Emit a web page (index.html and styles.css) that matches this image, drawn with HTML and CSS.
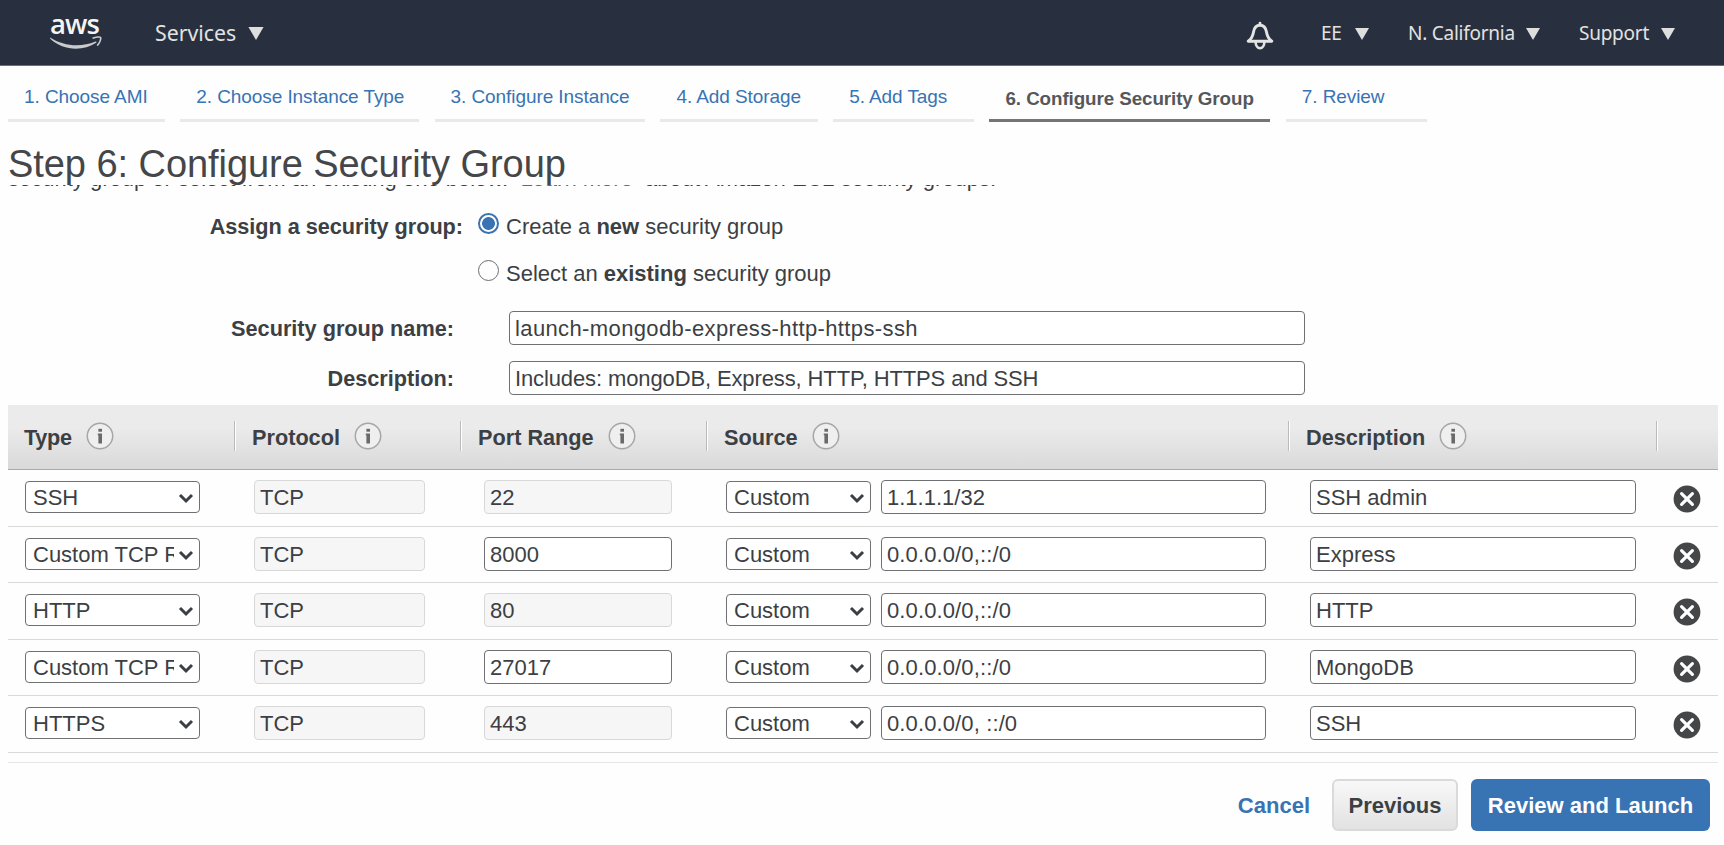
FILE: index.html
```html
<!DOCTYPE html>
<html lang="en">
<head>
<meta charset="utf-8">
<title>Step 6: Configure Security Group</title>
<link rel="stylesheet" href="styles.css">
</head>
<body>
<svg class="defs" width="0" height="0" aria-hidden="true">
  <symbol id="caret" viewBox="0 0 14 12"><path d="M0 0H14L7 12Z" fill="#dedede"/></symbol>
  <symbol id="info" viewBox="0 0 28 28"><circle cx="14" cy="14" r="12.7" fill="#efefef" stroke="#a6a6a6" stroke-width="1.5"/><rect x="12.4" y="6.8" width="3.6" height="2.9" fill="#6a6a6a"/><path d="M11.8 11.6H16V21.6H12.4V13.2H11.8Z" fill="#6a6a6a"/></symbol>
  <symbol id="chevron" viewBox="0 0 16 12"><path d="M2 3L8 9L14 3" fill="none" stroke="#3b3f45" stroke-width="3"/></symbol>
  <symbol id="remove" viewBox="0 0 28 28"><circle cx="14" cy="14" r="13.4" fill="#444648"/><path d="M8.6 8.6L19.4 19.4M19.4 8.6L8.6 19.4" stroke="#fff" stroke-width="3.2" stroke-linecap="round"/></symbol>
</svg>

<header class="nav">
  <div class="logo"><span class="logo-text">aws</span>
    <svg class="smile" viewBox="0 0 52 14" width="52" height="14"><path d="M0 1.5C14 10.5 31 11.5 45.5 5.5C46.5 5.3 47 6 46.2 6.8C33 15.5 13 15 0 2.5Z" fill="#c9cacc"/><path d="M42.5 2.2C46 .8 50 .6 50.6 1.5C51.2 3 49.6 7.2 47.2 9.6" fill="none" stroke="#c9cacc" stroke-width="1.6"/></svg>
  </div>
  <div class="menu services"><span>Services</span><svg width="16" height="13"><use href="#caret"/></svg></div>
  <svg class="bell" viewBox="0 0 28 30" width="28" height="30"><path d="M14 2.2V4M2.2 20.2C6 17.5 7 14.5 7.5 11C8.2 6.5 10.5 4.2 14 4.2S19.8 6.5 20.5 11C21 14.5 22 17.5 25.8 20.2Z" fill="none" stroke="#e4e4e4" stroke-width="2.9" stroke-linejoin="round" stroke-linecap="round"/><path d="M9.6 20.5C9.6 29.5 18.4 29.5 18.4 20.5" fill="none" stroke="#e4e4e4" stroke-width="2.6"/></svg>
  <div class="menu account"><span>EE</span><svg width="14" height="12"><use href="#caret"/></svg></div>
  <div class="menu region"><span>N. California</span><svg width="14" height="12"><use href="#caret"/></svg></div>
  <div class="menu support"><span>Support</span><svg width="14" height="12"><use href="#caret"/></svg></div>
</header>

<nav class="steps">
  <a class="step">1. Choose AMI</a>
  <a class="step">2. Choose Instance Type</a>
  <a class="step">3. Configure Instance</a>
  <a class="step">4. Add Storage</a>
  <a class="step">5. Add Tags</a>
  <a class="step active">6. Configure Security Group</a>
  <a class="step">7. Review</a>
</nav>

<h1 class="title"><span>Step 6: Configure Security Group</span></h1>

<main class="content">
  <p class="intro"><span>security group or select from an existing one below.&nbsp; <a>Learn more</a>&nbsp; about Amazon EC2 security groups.</span></p>
  <div class="assign">
    <span class="label">Assign a security group:</span>
    <i class="radio checked"></i>
    <span class="option">Create a <b>new</b> security group</span>
  </div>
  <div class="assign">
    <span class="label"></span>
    <i class="radio"></i>
    <span class="option">Select an <b>existing</b> security group</span>
  </div>
  <div class="fields">
    <span class="label">Security group name:</span><div class="field"><span class="gname">launch-mongodb-express-http-https-ssh</span></div>
    <span class="label">Description:</span><div class="field"><span class="gdesc">Includes: mongoDB, Express, HTTP, HTTPS and SSH</span></div>
  </div>

  <section class="rules">
    <div class="row head">
      <div class="th">Type<svg><use href="#info"/></svg></div>
      <div class="th">Protocol<svg><use href="#info"/></svg></div>
      <div class="th">Port Range<svg><use href="#info"/></svg></div>
      <div class="th">Source<svg><use href="#info"/></svg></div>
      <div class="th">Description<svg><use href="#info"/></svg></div>
      <div class="th"></div>
    </div>
    <div class="row">
      <div class="select type"><span>SSH</span><svg><use href="#chevron"/></svg></div>
      <div class="field off protocol">TCP</div>
      <div class="field off port">22</div>
      <div class="source"><div class="select"><span>Custom</span><svg><use href="#chevron"/></svg></div><div class="field">1.1.1.1/32</div></div>
      <div class="field desc">SSH admin</div>
      <svg class="remove"><use href="#remove"/></svg>
    </div>
    <div class="row">
      <div class="select type"><span>Custom TCP Rule</span><svg><use href="#chevron"/></svg></div>
      <div class="field off protocol">TCP</div>
      <div class="field port">8000</div>
      <div class="source"><div class="select"><span>Custom</span><svg><use href="#chevron"/></svg></div><div class="field cidr">0.0.0.0/0,::/0</div></div>
      <div class="field desc">Express</div>
      <svg class="remove"><use href="#remove"/></svg>
    </div>
    <div class="row">
      <div class="select type"><span>HTTP</span><svg><use href="#chevron"/></svg></div>
      <div class="field off protocol">TCP</div>
      <div class="field off port">80</div>
      <div class="source"><div class="select"><span>Custom</span><svg><use href="#chevron"/></svg></div><div class="field cidr">0.0.0.0/0,::/0</div></div>
      <div class="field desc">HTTP</div>
      <svg class="remove"><use href="#remove"/></svg>
    </div>
    <div class="row">
      <div class="select type"><span>Custom TCP Rule</span><svg><use href="#chevron"/></svg></div>
      <div class="field off protocol">TCP</div>
      <div class="field port">27017</div>
      <div class="source"><div class="select"><span>Custom</span><svg><use href="#chevron"/></svg></div><div class="field cidr">0.0.0.0/0,::/0</div></div>
      <div class="field desc">MongoDB</div>
      <svg class="remove"><use href="#remove"/></svg>
    </div>
    <div class="row">
      <div class="select type"><span>HTTPS</span><svg><use href="#chevron"/></svg></div>
      <div class="field off protocol">TCP</div>
      <div class="field off port">443</div>
      <div class="source"><div class="select"><span>Custom</span><svg><use href="#chevron"/></svg></div><div class="field cidr">0.0.0.0/0, ::/0</div></div>
      <div class="field desc">SSH</div>
      <svg class="remove"><use href="#remove"/></svg>
    </div>
  </section>
</main>

<footer class="actions">
  <a class="cancel">Cancel</a>
  <div class="btn previous">Previous</div>
  <div class="btn primary">Review and Launch</div>
</footer>
</body>
</html>
```
FILE: styles.css
```css
* { box-sizing: border-box; }
body {
  margin: 0;
  width: 1724px;
  height: 845px;
  overflow: hidden;
  background: #fefefe;
  color: #3c3f44;
  font: 22px/26px "Liberation Sans", Arial, sans-serif;
  white-space: nowrap;
}
svg { display: block; flex: none; }
.defs { position: absolute; }

.nav {
  display: flex;
  height: 66px;
  background: #28303f;
  border-bottom: 1px solid #6b6e72;
  color: #e2e2e2;
  font: 20px/28px "Noto Sans", "Open Sans", sans-serif;
}
.logo { width: 52px; margin: 8px 0 0 50px; }
.logo-text { display: block; height: 28px; font: 600 27.5px/32px "Open Sans", sans-serif; letter-spacing: -.9px; color: #f4f4f4; }
.menu { display: flex; align-items: flex-start; justify-content: space-between; padding-top: 19px; }
.menu svg { margin-top: 9px; }
.services { width: 109px; margin-left: 53px; font-size: 21.3px; }
.services svg { margin-top: 8px; }
.bell { margin: 21px 0 0 982px; }
.account { width: 48px; margin-left: 47px; }
.region { width: 132px; margin-left: 39px; }
.support { width: 96px; margin-left: 39px; }
.nav .account, .nav .region, .nav .support { font-size: 19px; letter-spacing: -.25px; }

.steps {
  display: grid;
  grid-template-columns: 157px 239px 210.5px 157.5px 141px 281px 141px;
  gap: 15.3px;
  height: 56px;
  padding-left: 8px;
}
.step { padding: 20px 0 0 16px; border-bottom: 3px solid #e9e9e9; color: #3873b3; font-size: 19px; line-height: 22px; letter-spacing: -.08px; }
.step.active { padding-top: 22px; border-color: #757575; color: #55575a; font-weight: bold; font-size: 18.8px; }

.title { height: 63px; margin: 0; padding: 20px 0 0 8px; font-weight: normal; font-size: 38px; line-height: 45px; letter-spacing: -.06px; color: #444649; }
.title span { position: relative; z-index: 1; }

.content { height: 578px; padding-left: 8px; }
.intro { display: flex; align-items: flex-end; height: 7px; margin: 0; overflow: hidden; }
a { color: #3873b3; }
.assign { display: flex; height: 47px; padding-top: 21px; line-height: 28px; }
.assign .label { width: 455px; letter-spacing: -.04px; }
.option { letter-spacing: -.01px; }
.label { text-align: right; font-weight: bold; font-size: 21.7px; }
.radio { flex: none; width: 21px; height: 21px; margin: 0 7px 0 15px; border: 1.5px solid #6b6d70; border-radius: 50%; }
.radio.checked { border: 2px solid #3873b3; background: radial-gradient(circle, #3873b3 6px, #fff 6.8px); }
.fields { display: grid; grid-template-columns: 446px 796px; grid-auto-rows: 34px; gap: 16px 55px; padding-top: 25px; }
.fields .label { padding-top: 5px; }

.field { height: 34px; border: 1.5px solid #6e7073; border-radius: 4px; padding: 4px 0 0 5px; background: #fff; overflow: hidden; }
.field.off { border-color: #d8d8d8; background: #f6f6f6; }
.gname { letter-spacing: .38px; }
.gdesc { letter-spacing: -.12px; }
.select { display: flex; align-items: flex-start; height: 32px; padding: 3px 5px 0 7px; border: 1.5px solid #6e7073; border-radius: 4px; background: #fff; }
.select span { flex: 1; overflow: hidden; }
.select svg { width: 16px; height: 12px; margin: 7px 0 0 4px; }

.rules { width: 1710px; margin-top: 10px; border-bottom: 1px solid #e6e6e6; height: 358px; }
.row { display: grid; grid-template-columns: 228px 226px 246px 582px 369px 1fr; height: 56.5px; padding-top: 10px; border-bottom: 1px solid #d9d9d9; }
.head { grid-template-columns: 226px 226px 246px 582px 368px 1fr; height: 65px; padding-top: 16px; background: linear-gradient(#ebebeb 35%, #d9d9d9); border-color: #aaa; }
.th { display: flex; height: 30px; padding: 4px 0 0 17px; font-weight: bold; font-size: 21.7px; border-left: 1px solid #bbb; box-shadow: inset 1px 0 #fff; }
.th:first-child { border: 0; box-shadow: none; padding-left: 16px; letter-spacing: -.3px; }
.th svg { width: 28px; height: 28px; margin: -3px 0 0 14px; }
.type { width: 175px; margin: 1px 0 0 17px; }
.protocol { width: 171px; margin-left: 18px; }
.port { width: 188px; margin-left: 22px; }
.source { display: grid; grid-template-columns: 145px 385px; gap: 10px; padding-left: 18px; }
.source .select { margin-top: 1px; }
.cidr { letter-spacing: .12px; }
.desc { width: 326px; margin-left: 20px; }
.remove { width: 28px; height: 28px; margin: 5px 0 0 14px; }

.actions { display: flex; height: 82px; padding: 16px 14px 0 0; justify-content: flex-end; font-weight: bold; line-height: 54px; }
.cancel { margin-right: 22px; }
.btn { height: 52px; border-radius: 6px; text-align: center; }
.previous { width: 126px; margin-right: 13px; border: 2px solid #dadada; line-height: 50px; background: linear-gradient(#f8f8f8, #e2e2e2); }
.primary { width: 239px; background: #3873b3; color: #fff; }
```
